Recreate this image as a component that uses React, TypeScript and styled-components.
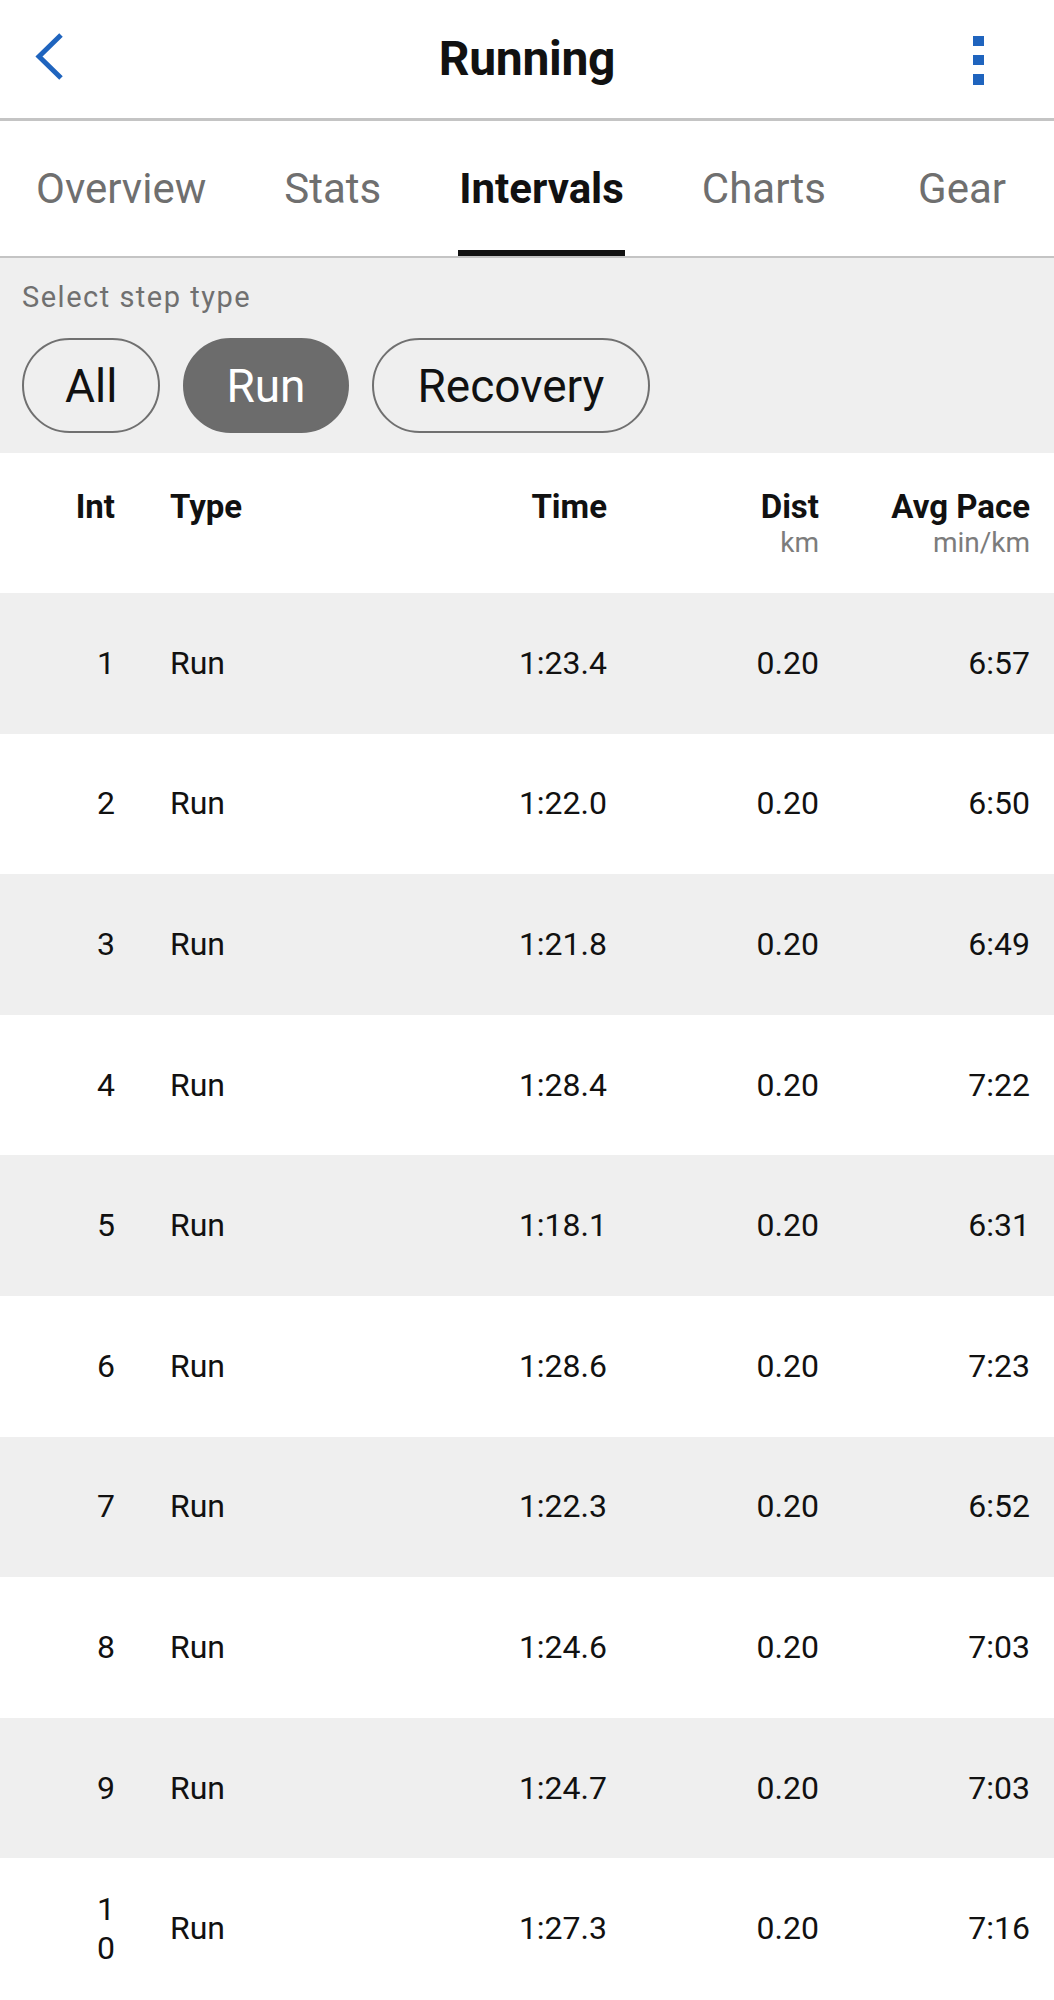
import React, { FC } from 'react'
import styled, { createGlobalStyle } from 'styled-components'

const GlobalStyle = createGlobalStyle`
  *, *::before, *::after {
    box-sizing: border-box;
  }

  body {
    margin: 0;
    background: #ffffff;
    font-family: Roboto, 'Liberation Sans', sans-serif;
    color: #111111;
  }
`

const TABS = ['Overview', 'Stats', 'Intervals', 'Charts', 'Gear']
const STEP_TYPES = ['All', 'Run', 'Recovery']

const INTERVALS = [
  { int: '1', time: '1:23.4', dist: '0.20', pace: '6:57' },
  { int: '2', time: '1:22.0', dist: '0.20', pace: '6:50' },
  { int: '3', time: '1:21.8', dist: '0.20', pace: '6:49' },
  { int: '4', time: '1:28.4', dist: '0.20', pace: '7:22' },
  { int: '5', time: '1:18.1', dist: '0.20', pace: '6:31' },
  { int: '6', time: '1:28.6', dist: '0.20', pace: '7:23' },
  { int: '7', time: '1:22.3', dist: '0.20', pace: '6:52' },
  { int: '8', time: '1:24.6', dist: '0.20', pace: '7:03' },
  { int: '9', time: '1:24.7', dist: '0.20', pace: '7:03' },
  { int: '10', time: '1:27.3', dist: '0.20', pace: '7:16' },
]

const App: FC = () => {
  return (
    <>
      <GlobalStyle />
      <Screen>
        <Header>
          <BackButton aria-label='Back'>
            <svg width='40' height='54' viewBox='0 0 40 54'>
              <polyline
                points='32,2 10,23.5 32,45'
                fill='none'
                stroke='#1f64be'
                strokeWidth='5'
                strokeLinejoin='miter'
              />
            </svg>
          </BackButton>
          <Title>Running</Title>
          <MenuButton aria-label='More'>
            <svg width='11' height='49' viewBox='0 0 11 49'>
              <rect x='0' y='0' width='11' height='10' fill='#1f64be' />
              <rect x='0' y='19' width='11' height='10' fill='#1f64be' />
              <rect x='0' y='38' width='11' height='11' fill='#1f64be' />
            </svg>
          </MenuButton>
        </Header>

        <TabBar>
          {TABS.map(tab => (
            <Tab key={tab} $active={tab === 'Intervals'}>
              {tab}
            </Tab>
          ))}
        </TabBar>

        <FilterSection>
          <FilterLabel>Select step type</FilterLabel>
          <PillRow>
            {STEP_TYPES.map(type => (
              <Pill key={type} $active={type === 'Run'}>
                {type}
              </Pill>
            ))}
          </PillRow>
        </FilterSection>

        <HeadRow>
          <HeadCell $align='right'>
            <HeadLabel>Int</HeadLabel>
          </HeadCell>
          <HeadCell $align='left'>
            <HeadLabel>Type</HeadLabel>
          </HeadCell>
          <HeadCell $align='right'>
            <HeadLabel>Time</HeadLabel>
          </HeadCell>
          <HeadCell $align='right'>
            <HeadLabel>Dist</HeadLabel>
            <HeadUnit>km</HeadUnit>
          </HeadCell>
          <HeadCell $align='right'>
            <HeadLabel>Avg Pace</HeadLabel>
            <HeadUnit>min/km</HeadUnit>
          </HeadCell>
        </HeadRow>

        {INTERVALS.map((row, i) => (
          <Row key={row.int} $shaded={i % 2 === 0}>
            <IntCell>{row.int}</IntCell>
            <TypeCell>Run</TypeCell>
            <ValueCell>{row.time}</ValueCell>
            <ValueCell>{row.dist}</ValueCell>
            <ValueCell>{row.pace}</ValueCell>
          </Row>
        ))}
      </Screen>
    </>
  )
}

export default App

const Screen = styled.div`
  width: 1054px;
  background: #ffffff;
`

const Header = styled.header`
  display: grid;
  grid-template-columns: 1fr auto 1fr;
  align-items: center;

  height: 121px;
  border-bottom: 3px solid #c4c4c4;
`

const BackButton = styled.div`
  display: flex;
  align-items: center;
  justify-self: start;

  padding-left: 29px;
  padding-top: 2px;
`

const Title = styled.h1`
  margin: 0;

  font-size: 48px;
  font-weight: 700;
  line-height: 1;
  letter-spacing: -0.3px;
  color: #111111;
`

const MenuButton = styled.div`
  display: flex;
  align-items: center;
  justify-self: end;

  padding-right: 70px;
  padding-top: 3px;
`

const TabBar = styled.nav`
  display: flex;
  gap: 78px;

  height: 137px;
  padding: 0 48px 0 36px;
  border-bottom: 2px solid #c4c4c4;
`

const Tab = styled.div<{ $active: boolean }>`
  position: relative;

  display: flex;
  align-items: center;

  height: 100%;

  font-size: 42px;
  font-weight: ${p => (p.$active ? 700 : 400)};
  color: ${p => (p.$active ? '#111111' : '#6f6f6f')};
  white-space: nowrap;

  &:last-child {
    margin-left: auto;
  }

  &::after {
    content: '';
    display: ${p => (p.$active ? 'block' : 'none')};
    position: absolute;
    left: -1px;
    right: -1px;
    bottom: 0;
    height: 6px;
    background: #111111;
  }
`

const FilterSection = styled.section`
  height: 195px;
  padding: 22px 22px 20px;
  background: #efefef;
`

const FilterLabel = styled.div`
  margin-bottom: 24px;

  font-size: 29px;
  line-height: 34px;
  letter-spacing: 1.5px;
  color: #707070;
`

const PillRow = styled.div`
  display: flex;
  gap: 23px;
`

const Pill = styled.div<{ $active: boolean }>`
  display: flex;
  align-items: center;

  height: 95px;
  padding: 0 41px;

  font-size: 46px;
  color: ${p => (p.$active ? '#ffffff' : '#111111')};
  background: ${p => (p.$active ? '#6c6c6c' : 'transparent')};
  border: 2px solid ${p => (p.$active ? '#6c6c6c' : '#707070')};
  border-radius: 48px;

  &:last-child {
    padding: 0 44px;
  }
`

const Grid = styled.div`
  display: grid;
  grid-template-columns: 115px 1fr 190px 212px 211px;

  padding-right: 24px;
`

const HeadRow = styled(Grid)`
  height: 140px;
  background: #ffffff;
`

const HeadCell = styled.div<{ $align: 'left' | 'right' }>`
  display: flex;
  flex-direction: column;
  align-items: ${p => (p.$align === 'right' ? 'flex-end' : 'flex-start')};

  padding-top: 35px;
  padding-left: ${p => (p.$align === 'left' ? '55px' : '0')};
`

const HeadLabel = styled.div`
  font-size: 33px;
  font-weight: 700;
  line-height: 38px;
  color: #111111;
  white-space: nowrap;
`

const HeadUnit = styled.div`
  font-size: 28px;
  line-height: 34px;
  color: #7c7c7c;
`

const Row = styled(Grid)<{ $shaded: boolean }>`
  align-items: center;

  height: 140.6px;

  font-size: 32px;
  line-height: 39px;
  background: ${p => (p.$shaded ? '#efefef' : '#ffffff')};
`

const IntCell = styled.div`
  padding-left: 81px;

  text-align: right;
  word-break: break-all;
`

const TypeCell = styled.div`
  padding-left: 55px;
`

const ValueCell = styled.div`
  text-align: right;
`
